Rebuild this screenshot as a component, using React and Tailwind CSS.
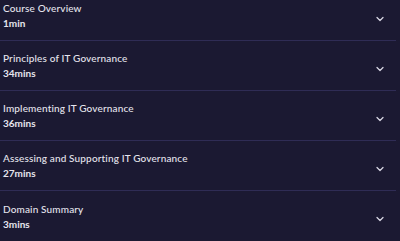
import { ChevronDown } from 'lucide-react'

const modules = [
  { title: 'Course Overview', time: '1min' },
  { title: 'Principles of IT Governance', time: '34mins' },
  { title: 'Implementing IT Governance', time: '36mins' },
  { title: 'Assessing and Supporting IT Governance', time: '27mins' },
  { title: 'Domain Summary', time: '3mins' },
]

export default function App() {
  return (
    <div className="w-[400px] h-[241px] overflow-hidden bg-[#1b1932] font-['Lato',sans-serif] text-[#e6e5ee]">
      <div className="-mt-[9px] pr-[4px]">
        {modules.map((m, i) => (
          <div key={i} className={`flex items-center justify-between h-[50px] pl-[3px] pr-[10px] ${i < modules.length - 1 ? 'border-b border-[#2f2c55]' : ''}`}>
            <div className="flex flex-col leading-[15px] pt-[1px]">
              <span className="text-[10px] font-medium tracking-[0.15px]">{m.title}</span>
              <span className="text-[10px] font-bold">{m.time}</span>
            </div>
            <ChevronDown size={12} strokeWidth={2.5} className="text-[#d8d7e4] mt-[6px]" />
          </div>
        ))}
      </div>
    </div>
  )
}
